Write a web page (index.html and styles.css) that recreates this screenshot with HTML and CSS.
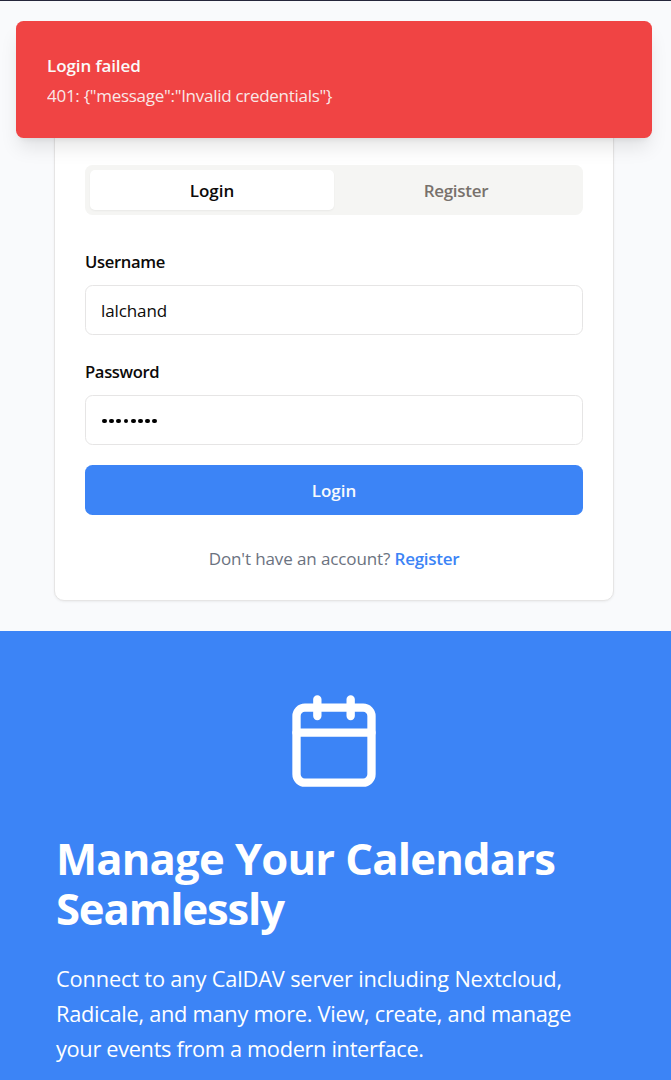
FILE: index.html
```
<!DOCTYPE html>
<html lang="en">
<head>
<meta charset="utf-8">
<title>Login</title>
<link rel="stylesheet" href="styles.css">
</head>
<body>
<div class="toast" role="alert">
  <div class="toast-title">Login failed</div>
  <div class="toast-message">401: {"message":"Invalid credentials"}</div>
</div>
<main class="auth">
  <section class="card">
    <div class="tabs">
      <button class="tab tab-active" type="button">Login</button>
      <button class="tab" type="button">Register</button>
    </div>
    <form class="form">
      <div class="field">
        <label class="label" for="username">Username</label>
        <input class="input" id="username" type="text" value="lalchand">
      </div>
      <div class="field">
        <label class="label" for="password">Password</label>
        <div class="input password" id="password">
          <i></i><i></i><i></i><i></i><i></i><i></i><i></i><i></i>
        </div>
      </div>
      <button class="submit" type="button">Login</button>
    </form>
    <p class="switch"><span>Don't have an account?</span> <a class="link">Register</a></p>
  </section>
</main>
<section class="hero">
  <svg class="hero-icon" viewBox="0 0 24 24" fill="none" stroke="currentColor" stroke-width="2" stroke-linecap="round" stroke-linejoin="round">
    <rect x="3" y="4" width="18" height="18" rx="2"/>
    <path d="M16 2v4M8 2v4M3 10h18"/>
  </svg>
  <h1 class="hero-title"><span class="title-first">Manage Your Calendars</span> <span class="title-second">Seamlessly</span></h1>
  <p class="hero-text">
    <span class="text-first">Connect to any CalDAV server including Nextcloud,</span>
    <span class="text-second">Radicale, and many more. View, create, and manage</span>
    <span class="text-third">your events from a modern interface.</span>
  </p>
</section>
</body>
</html>
```
FILE: styles.css
```
* { box-sizing: border-box; }

body {
  margin: 0;
  height: 1080px;
  overflow: hidden;
  background: #f9fafc;
  border-top: 1px solid #25263b;
  color: #0c0a09;
  font-family: "Open Sans", "Noto Sans", sans-serif;
  font-size: 17px;
  line-height: 25px;
}

button, input { font: inherit; color: inherit; }

.toast {
  position: absolute;
  z-index: 10;
  top: 21px;
  left: 16px;
  width: 636px;
  height: 117px;
  padding: 32px 31px;
  border-radius: 7.5px;
  background: #f04444;
  color: #fafaf9;
  box-shadow: 0 12.5px 18.75px -3.75px rgba(0, 0, 0, .1), 0 5px 7.5px -5px rgba(0, 0, 0, .1);
}

.toast-title { font-weight: 600; letter-spacing: -.1px; }
.toast-message { margin-top: 5px; opacity: .9; letter-spacing: -.28px; white-space: nowrap; }

.auth {
  display: flex;
  align-items: flex-end;
  height: 630px;
  padding: 0 57px 30px 54px;
}

.card {
  width: 560px;
  flex: none;
  padding: 30px;
  border: 1px solid #e6e5e5;
  border-radius: 10px;
  background: #fff;
  box-shadow: 0 1px 2.5px rgba(0, 0, 0, .06);
}

.tabs {
  display: flex;
  height: 50px;
  margin-top: 41px;
  padding: 5px;
  border-radius: 7.5px;
  background: #f5f5f3;
}

.tab {
  flex: 1;
  padding: 1px 0 0;
  border: 0;
  border-radius: 5px;
  background: none;
  color: #78716c;
  font-weight: 600;
  letter-spacing: -.28px;
}

.tab-active {
  background: #fff;
  color: #0c0a09;
  box-shadow: 0 1px 2px rgba(0, 0, 0, .05);
  letter-spacing: 0;
}

.form {
  display: flex;
  flex-direction: column;
  gap: 20px;
  margin-top: 30px;
}

.field { display: flex; flex-direction: column; gap: 11px; padding-top: 4px; }
.field + .field { margin-top: 0; }

.label {
  height: 25px;
  font-size: 16.6px;
  font-weight: 600;
  letter-spacing: -.35px;
}

.input {
  width: 100%;
  height: 50px;
  padding: 1px 15px 0;
  border: 1px solid #e6e5e5;
  border-radius: 7.5px;
  background: #fff;
  letter-spacing: -.1px;
}

.password { display: flex; align-items: center; gap: 2.4px; padding: 2px 16px 0; }
.password i { width: 4.8px; height: 4.8px; border-radius: 50%; background: #000; }

.submit {
  height: 50px;
  padding: 0;
  border: 0;
  border-radius: 7.5px;
  background: #3c84f6;
  color: #f8fafc;
  font-weight: 600;
}

.switch {
  margin: 31px 0 -1px;
  color: #6b7280;
  text-align: center;
  letter-spacing: -.11px;
}

.link { color: #3c84f6; font-weight: 600; letter-spacing: -.28px; }

.hero {
  height: 450px;
  padding: 60px 56px 0;
  background: #3c84f6;
  color: #fff;
}

.hero-icon { display: block; width: 100px; height: 100px; margin: 0 auto 42px 228px; }

.hero-title {
  margin: 0;
  font-size: 43.6px;
  line-height: 50px;
  font-weight: 700;
}

.hero-title span, .hero-text span { display: block; white-space: nowrap; }
.title-first { letter-spacing: -.83px; word-spacing: .6px; }
.title-second { letter-spacing: -1.15px; }

.hero-text { margin: 28px 0 0; font-size: 21.8px; line-height: 35px; }
.text-first { letter-spacing: -.17px; }
.text-second { letter-spacing: -.28px; }
.text-third { letter-spacing: -.34px; }
```
